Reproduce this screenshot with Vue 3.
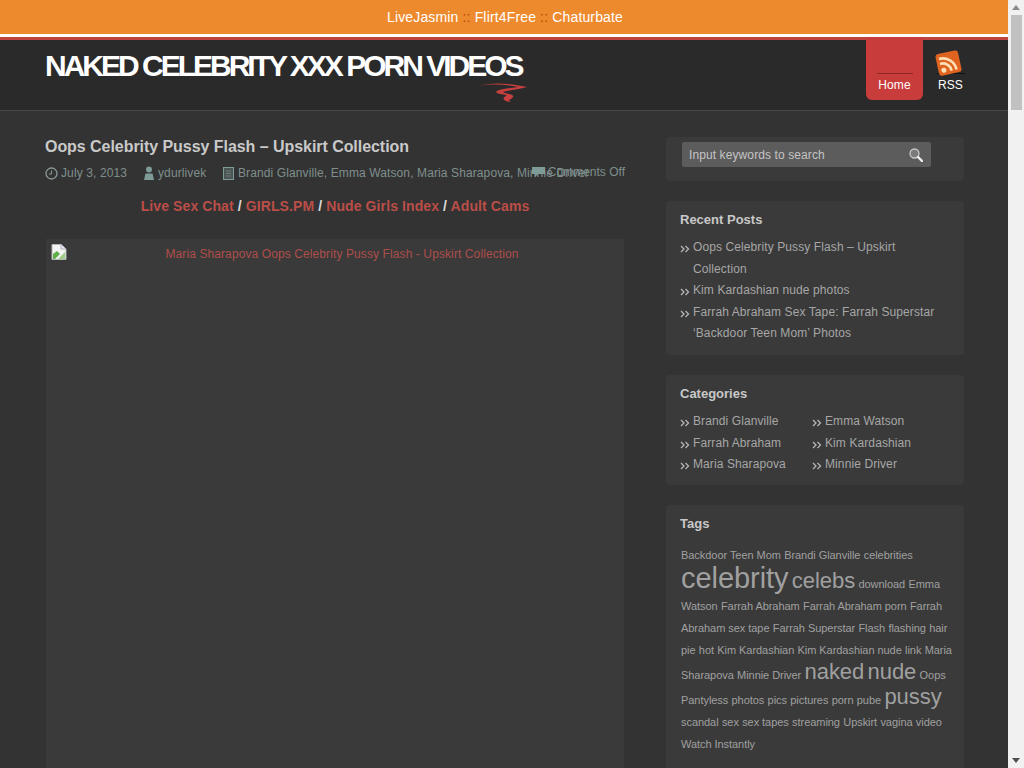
<script setup>
const topLinks = ['LiveJasmin', 'Flirt4Free', 'Chaturbate']
const promos = ['Live Sex Chat', 'GIRLS.PM', 'Nude Girls Index', 'Adult Cams']
const recent = [
  'Oops Celebrity Pussy Flash – Upskirt Collection',
  'Kim Kardashian nude photos',
  "Farrah Abraham Sex Tape: Farrah Superstar ‘Backdoor Teen Mom’ Photos",
]
const categories = [
  'Brandi Glanville', 'Emma Watson', 'Farrah Abraham',
  'Kim Kardashian', 'Maria Sharapova', 'Minnie Driver',
]
const tags = [
  ['Backdoor Teen Mom', 11], ['Brandi Glanville', 11], ['celebrities', 11],
  ['celebrity', 29], ['celebs', 22], ['download', 11], ['Emma Watson', 11],
  ['Farrah Abraham', 11], ['Farrah Abraham porn', 11], ['Farrah Abraham sex tape', 11],
  ['Farrah Superstar', 11], ['Flash', 11], ['flashing', 11], ['hair pie', 11], ['hot', 11],
  ['Kim Kardashian', 11], ['Kim Kardashian nude', 11], ['link', 11], ['Maria Sharapova', 11],
  ['Minnie Driver', 11], ['naked', 22], ['nude', 22], ['Oops', 11], ['Pantyless', 11],
  ['photos', 11], ['pics', 11], ['pictures', 11], ['porn', 11], ['pube', 11], ['pussy', 22],
  ['scandal', 11], ['sex', 11], ['sex tapes', 11], ['streaming', 11], ['Upskirt', 11],
  ['vagina', 11], ['video', 11], ['Watch Instantly', 11],
]
</script>

<template>
  <div class="screen">
    <div class="page">
      <div class="topbar">
        <template v-for="(l, i) in topLinks" :key="l">
          <span v-if="i" class="sep"> :: </span><a>{{ l }}</a>
        </template>
      </div>

      <header class="header">
        <div class="logo">
          <h1>NAKED CELEBRITY XXX PORN VIDEOS</h1>
          <svg class="swoosh" width="50" height="22" viewBox="0 0 50 22">
            <path d="M0 4C8 1 25 0 47 5C38 8 28 8 23 10C26 12 35 12 33 15C31 18 26 18 32 20C26 20 20 17 26 14C28 12 18 13 16 10C18 7 32 6 38 5C25 2 10 2 0 4Z" fill="#c8403f" />
          </svg>
        </div>
        <nav class="nav">
          <a class="nav-item active"><span class="nav-label">Home</span></a>
          <a class="nav-item rss-item">
            <svg class="rss" width="30" height="26" viewBox="0 0 30 26">
              <g transform="rotate(-12 15 13)">
                <rect x="3" y="2" width="23" height="22" rx="3" fill="#e0641f" />
                <circle cx="8.500" cy="19" r="2.500" fill="#fde0b8" />
                <path d="M6 12 A9 9 0 0 1 16 21" fill="none" stroke="#fde0b8" stroke-width="2.600" />
                <path d="M6 7 A14 14 0 0 1 21 21" fill="none" stroke="#fde0b8" stroke-width="2.600" />
              </g>
            </svg>
            <span class="nav-label">RSS</span>
          </a>
        </nav>
      </header>

      <div class="columns">
        <main class="content">
          <h2 class="title">Oops Celebrity Pussy Flash – Upskirt Collection</h2>
          <div class="meta">
            <span class="meta-item date">
              <svg width="13" height="13" viewBox="0 0 13 13"><circle cx="6.500" cy="6.500" r="5.500" fill="none" stroke="#8a9a98" stroke-width="1.300" /><path d="M6.500 3.500V7H4" fill="none" stroke="#8a9a98" /></svg>
              July 3, 2013
            </span>
            <span class="meta-item author">
              <svg width="12" height="14" viewBox="0 0 12 14"><circle cx="6" cy="3.500" r="3" fill="#7f9b98" /><path d="M1 14 L2.500 7.500 H9.500 L11 14Z" fill="#7f9b98" /></svg>
              ydurlivek
            </span>
            <span class="meta-item cats">
              <svg width="11" height="13" viewBox="0 0 11 13"><rect x="0.500" y="0.500" width="10" height="12" fill="#4a5554" stroke="#7f9b98" /><path d="M3 4h5M3 6.500h5M3 9h5" stroke="#7f9b98" stroke-width="0.600" /></svg>
              Brandi Glanville, Emma Watson, Maria Sharapova, Minnie Driver
            </span>
            <span class="comments">
              <svg width="13" height="12" viewBox="0 0 13 12"><path d="M0 1h13v7H6l-3 3V8H0z" fill="#7f9b98" /></svg>
              Comments Off
            </span>
          </div>
          <p class="promo">
            <template v-for="(p, i) in promos" :key="p">
              <span v-if="i" class="slash"> / </span><a>{{ p }}</a>
            </template>
          </p>
          <div class="image-box">
            <svg class="broken" width="16" height="16" viewBox="0 0 16 16">
              <path d="M1 0.500H10L15 5V15.500H1Z" fill="#f4f4f4" stroke="#b5b5b5" />
              <path d="M10 0.500V5H15" fill="#dfe8f4" stroke="#b5b5b5" />
              <path d="M2 15V10L6 7L9 10L4 15Z" fill="#5fae4a" />
              <path d="M7 15L14 8V15Z" fill="#9fcf8a" />
            </svg>
            <span class="alt">Maria Sharapova Oops Celebrity Pussy Flash - Upskirt Collection</span>
          </div>
        </main>

        <aside class="sidebar">
          <div class="widget search">
            <div class="search-box">
              <span>Input keywords to search</span>
              <svg width="14" height="14" viewBox="0 0 14 14">
                <circle cx="5.500" cy="5.500" r="4.500" fill="#7a7a7a" stroke="#c8c8c8" stroke-width="1.300" />
                <path d="M9 9L13 13" stroke="#f2f2f2" stroke-width="2.400" stroke-linecap="round" />
              </svg>
            </div>
          </div>

          <div class="widget recent">
            <h3>Recent Posts</h3>
            <ul>
              <li v-for="r in recent" :key="r">
                <svg class="mark" width="10" height="8" viewBox="0 0 10 8"><path d="M1 1L4 4L1 7M5.500 1L8.500 4L5.500 7" fill="none" stroke="#b5b5b5" stroke-width="1.300" /></svg>
                <a>{{ r }}</a>
              </li>
            </ul>
          </div>

          <div class="widget cats-widget">
            <h3>Categories</h3>
            <ul class="cat-grid">
              <li v-for="c in categories" :key="c">
                <svg class="mark" width="10" height="8" viewBox="0 0 10 8"><path d="M1 1L4 4L1 7M5.500 1L8.500 4L5.500 7" fill="none" stroke="#b5b5b5" stroke-width="1.300" /></svg>
                <a>{{ c }}</a>
              </li>
            </ul>
          </div>

          <div class="widget tags-widget">
            <h3>Tags</h3>
            <div class="cloud">
              <template v-for="t in tags" :key="t[0]">
                <a :class="{ largest: t[1] === 29 }" :style="{ fontSize: t[1] + 'px' }">{{ t[0] }}</a>{{ ' ' }}
              </template>
            </div>
          </div>
        </aside>
      </div>
    </div>

    <div class="scrollbar">
      <div class="arrow">
        <svg width="8" height="5" viewBox="0 0 8 5"><path d="M0 5L4 0L8 5Z" fill="#8a8a8a" /></svg>
      </div>
      <div class="thumb"></div>
      <div class="track"></div>
      <div class="arrow">
        <svg width="8" height="5" viewBox="0 0 8 5"><path d="M0 0L4 5L8 0Z" fill="#505050" /></svg>
      </div>
    </div>
  </div>
</template>

<style scoped>
.screen {
  display: flex;
  height: 768px;
  overflow: hidden;
  font-family: "Liberation Sans", Arial, sans-serif;
  background: #333;
}

.page {
  flex: 1;
  min-width: 0;
  background: #333;
}

.topbar {
  height: 34px;
  padding-left: 2px;
  line-height: 34px;
  background: #ee8a2e;
  border-bottom: 3px solid #fff;
  text-align: center;
  color: #fff;
  font-size: 14px;
  letter-spacing: 0.15px;
}

.sep {
  color: #b8480a;
  white-space: pre;
}

.header {
  display: flex;
  justify-content: space-between;
  height: 70px;
  padding: 0 30px 0 45px;
  background: #2a2a2a;
  border-top: 3px solid #c0453c;
  border-bottom: 1px solid #484848;
}

.logo {
  position: relative;
}

.logo h1 {
  margin: 8px 0 0;
  font-size: 30px;
  line-height: 36px;
  letter-spacing: -3px;
  font-weight: 700;
  color: #fff;
  white-space: nowrap;
}

.swoosh {
  position: absolute;
  left: 435px;
  top: 42px;
}

.nav {
  display: flex;
}

.nav-item {
  position: relative;
  display: flex;
  flex-direction: column;
  justify-content: flex-end;
  align-items: center;
  width: 57px;
  height: 63px;
  margin-top: -3px;
  color: #fff;
  font-size: 12px;
  letter-spacing: 0.1px;
  border-radius: 0 0 6px 6px;
}

.nav-item.active {
  background: #c83c3c;
}

.rss-item {
  width: 55px;
}

.nav-label {
  width: 36px;
  text-align: center;
  border-top: 1px solid #8d2626;
  padding: 4px 0 8px;
  line-height: 14px;
}

.rss-item .nav-label {
  width: 28px;
  border-top-color: #111;
}

.rss {
  position: absolute;
  left: 11px;
  top: 13px;
}

.columns {
  display: flex;
  gap: 41px;
  padding: 0 44px 0 45px;
}

.content {
  width: 580px;
  flex: none;
}

.title {
  margin: 26px 0 0;
  font-size: 16px;
  line-height: 20px;
  font-weight: 700;
  color: #c9c9c9;
  letter-spacing: -0.05px;
}

.meta {
  position: relative;
  display: flex;
  height: 18px;
  margin-top: 7px;
  font-size: 12px;
  line-height: 18px;
  color: #7f8f8d;
  white-space: nowrap;
  letter-spacing: 0.11px;
}

.meta-item {
  display: flex;
  align-items: center;
  gap: 3px;
}

.date {
  width: 98px;
}

.author {
  width: 80px;
}

.cats {
  gap: 4px;
}

.comments {
  position: absolute;
  right: 0;
  top: -1px;
  display: flex;
  align-items: center;
  gap: 3px;
  letter-spacing: 0;
}

.promo {
  margin: 15px 0 0;
  text-align: center;
  font-size: 14px;
  line-height: 18px;
  font-weight: 700;
  color: #bb4e48;
  letter-spacing: 0.1px;
}

.slash {
  color: #ddd;
  white-space: pre;
}

.image-box {
  position: relative;
  height: 600px;
  margin: 24px 1px 0 1px;
  padding: 7px 0 0 14px;
  background: #3a3a3a;
  text-align: center;
  font-size: 12px;
  line-height: 16px;
  color: #ae4e4a;
  letter-spacing: 0.1px;
}

.broken {
  position: absolute;
  left: 5px;
  top: 5px;
}

.sidebar {
  width: 298px;
  flex: none;
  padding-top: 26px;
}

.widget {
  margin-bottom: 20px;
  padding: 12px 14px 10px;
  background: #3a3a3a;
  border-radius: 4px;
  color: #a6a6a6;
  font-size: 12px;
}

.widget h3 {
  margin: 0 0 10px;
  font-size: 13px;
  line-height: 14px;
  font-weight: 700;
  color: #c8c8c8;
}

.widget ul {
  margin: 0;
  padding: 0;
  list-style: none;
}

.recent ul {
  padding-right: 10px;
}

.cats-widget {
  padding-bottom: 9px;
}

.tags-widget {
  padding-bottom: 24px;
}

.widget li {
  position: relative;
  padding-left: 13px;
  line-height: 21.6px;
  color: #a6a6a6;
  letter-spacing: 0.1px;
}

.mark {
  position: absolute;
  left: 0;
  top: 8px;
}

.search {
  height: 39px;
  padding: 5px 16px 0;
}

.search-box {
  display: flex;
  align-items: center;
  justify-content: space-between;
  width: 249px;
  height: 25px;
  padding: 0 8px 0 7px;
  box-sizing: border-box;
  background: #5c5c5c;
  border-radius: 2px;
  color: #c4c4c4;
  letter-spacing: 0.1px;
}

.cat-grid {
  display: grid;
  grid-template-columns: 132px 1fr;
}

.cloud {
  margin: 13px -6px 0 0;
  padding-left: 1px;
  line-height: 22px;
  color: #a0a0a0;
  letter-spacing: -0.05px;
}

.largest {
  line-height: 24px;
}

.scrollbar {
  display: flex;
  flex-direction: column;
  width: 16px;
  flex: none;
  background: #f1f1f1;
}

.arrow {
  display: flex;
  align-items: center;
  justify-content: center;
  height: 15px;
  background: #f1f1f1;
}

.thumb {
  height: 95px;
  margin: 0 2px 0 3px;
  background: #c1c1c1;
}

.track {
  flex: 1;
}
</style>

<style>
html, body {
  margin: 0;
  overflow: hidden;
}
</style>
